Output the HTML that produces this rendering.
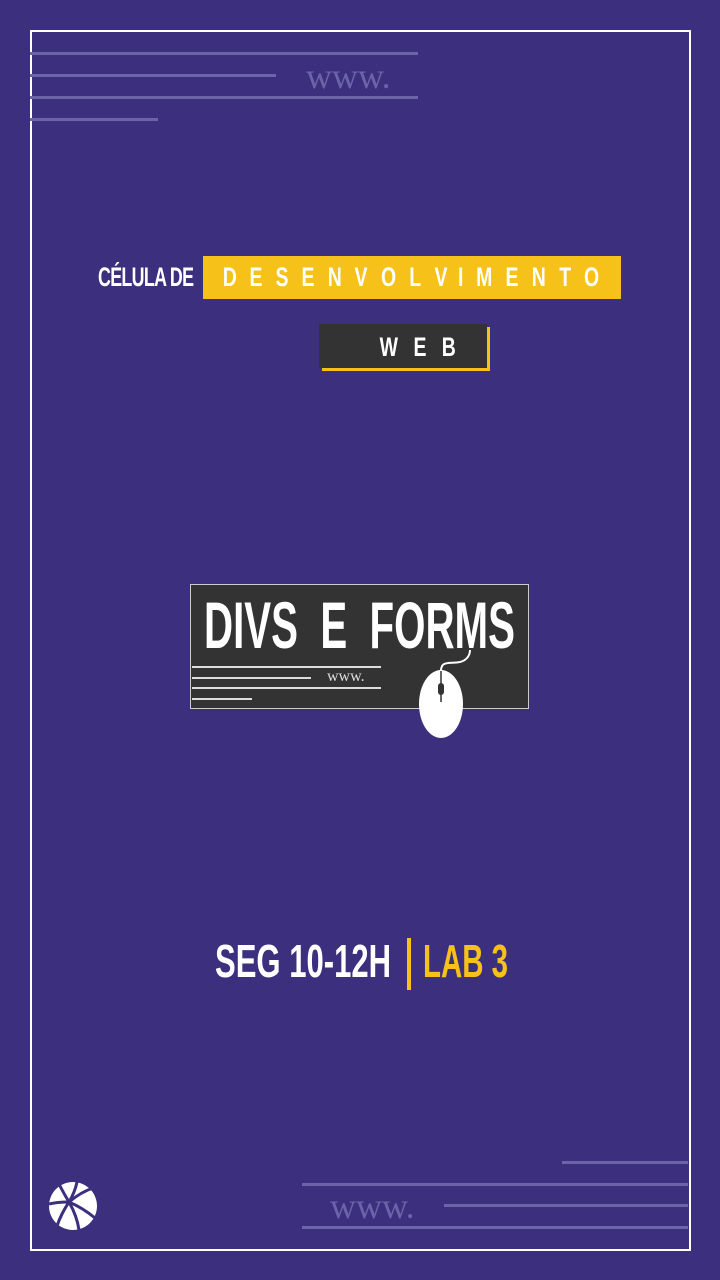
<!DOCTYPE html>
<html><head><meta charset="utf-8"><style>
body{margin:0;width:720px;height:1280px;background:#3b2f7e;position:relative;overflow:hidden;font-family:"Liberation Sans Narrow","Liberation Sans",sans-serif}
.a{position:absolute}
.ln{position:absolute;height:3px;background:#6c63a8}
.w{position:absolute;font-family:"Liberation Serif",serif;color:#6c63a8;font-size:36px;line-height:1}
.dl span{display:inline-block;transform:scaleX(.72)}
</style></head><body>
<div class="a" style="left:30px;top:30px;width:657px;height:1217px;border:2px solid #fff"></div>
<div class="ln" style="left:30px;top:52px;width:388px"></div>
<div class="ln" style="left:30px;top:74px;width:246px"></div>
<div class="ln" style="left:30px;top:96px;width:388px"></div>
<div class="ln" style="left:30px;top:118px;width:128px"></div>
<div class="w" style="left:306px;top:58px">www.</div>
<div class="ln" style="left:562px;top:1161px;width:126px"></div>
<div class="ln" style="left:302px;top:1183px;width:386px"></div>
<div class="ln" style="left:444px;top:1204px;width:244px"></div>
<div class="ln" style="left:302px;top:1226px;width:386px"></div>
<div class="w" style="left:330px;top:1188px">www.</div>

<div class="a" style="left:98px;top:262px;color:#fff;font-size:27px;font-weight:bold;letter-spacing:-1px;transform:scaleX(.66);transform-origin:left;white-space:nowrap">CÉLULA DE</div>
<div class="a" style="left:203px;top:256px;width:418px;height:43px;background:#f6c118"></div>
<div class="a dl" style="left:220px;top:262px;width:382px;display:flex;justify-content:space-between;color:#fff;font-size:27px;font-weight:bold"><span>D</span><span>E</span><span>S</span><span>E</span><span>N</span><span>V</span><span>O</span><span>L</span><span>V</span><span>I</span><span>M</span><span>E</span><span>N</span><span>T</span><span>O</span></div>
<div class="a" style="left:319px;top:324px;width:168px;height:44px;background:#333;box-shadow:3px 3px 0 #f6c118"></div>
<div class="a dl" style="left:376px;top:332px;width:82px;display:flex;justify-content:space-between;color:#fff;font-size:27px;font-weight:bold"><span>W</span><span>E</span><span>B</span></div>

<div class="a" style="left:190px;top:584px;width:337px;height:123px;background:#333;border:1px solid #ccc"></div>
<div class="a" style="left:204px;top:592px;color:#fff;font-size:66px;font-weight:bold;line-height:1;transform:scaleX(.61);transform-origin:left;white-space:pre">DIVS  E  FORMS</div>
<div class="a" style="left:192px;top:666px;width:189px;height:2px;background:#ddd"></div>
<div class="a" style="left:192px;top:677px;width:119px;height:2px;background:#ddd"></div>
<div class="a" style="left:192px;top:687px;width:189px;height:2px;background:#ddd"></div>
<div class="a" style="left:192px;top:698px;width:60px;height:2px;background:#ddd"></div>
<div class="a" style="left:327px;top:668px;color:#ddd;font-family:'Liberation Serif',serif;font-size:16px">www.</div>
<svg class="a" style="left:400px;top:640px" width="90" height="105">
<path d="M41 31 C41 20 50 24 60 22 C68 20 70 14 70 10" stroke="#fff" stroke-width="2" fill="none"/>
<ellipse cx="41" cy="64" rx="22" ry="34" fill="#fff"/>
<line x1="41" y1="31" x2="41" y2="62" stroke="#333" stroke-width="1.5"/>
<rect x="38" y="43" width="6" height="12" rx="3" fill="#333"/>
</svg>

<div class="a" style="left:215px;top:938px;color:#fff;font-size:46px;font-weight:bold;line-height:1;transform:scaleX(.675);transform-origin:left;white-space:nowrap">SEG 10-12H</div>
<div class="a" style="left:407px;top:938px;width:4px;height:52px;background:#f6c118"></div>
<div class="a" style="left:423px;top:938px;color:#f6c118;font-size:46px;font-weight:bold;line-height:1;transform:scaleX(.64);transform-origin:left;white-space:nowrap">LAB 3</div>

<svg class="a" style="left:49px;top:1182px" width="48" height="48" viewBox="0 0 48 48">
<circle cx="24" cy="24" r="24" fill="#fff"/>
<g stroke="#3b2f7e" stroke-width="3" fill="none">
<path d="M20 20 Q32 10 44 6"/><path d="M20 20 Q34 26 46 36"/><path d="M20 20 Q28 34 30 48"/><path d="M20 20 Q12 32 8 44"/><path d="M20 20 Q8 20 0 22"/><path d="M20 20 Q14 10 10 2"/><path d="M20 20 Q26 10 28 0"/>
</g>
</svg>
</body></html>
